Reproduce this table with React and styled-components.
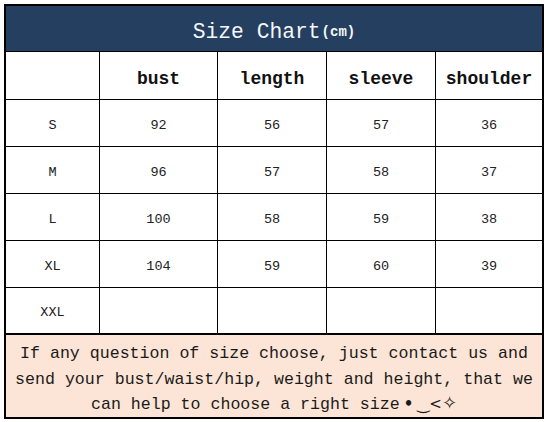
import React from "react";
import styled, { createGlobalStyle } from "styled-components";

const Global = createGlobalStyle`
  html, body { margin: 0; padding: 0; background: #ffffff; }
  body { font-family: "Liberation Mono", "DejaVu Sans Mono", monospace; }
`;

const Page = styled.div`
  width: 548px;
  height: 422px;
  padding: 4px 0 0 4px;
  box-sizing: border-box;
`;

const Frame = styled.div`
  width: 540px;
  box-sizing: border-box;
  border: 2px solid #000;
  display: flex;
  flex-direction: column;
`;

const Title = styled.div`
  background: #243f60;
  border-bottom: 1px solid #000;
  color: #f4f6f8;
  display: flex;
  align-items: center;
  justify-content: center;
  font-size: 21.3px;
  padding-top: 6px;
  height: 39px;
`;

const Unit = styled.span`
  font-size: 14px;
  font-weight: bold;
  margin-left: 1px;
`;

const Grid = styled.div`
  display: grid;
  grid-template-columns: 93px 117px 108px 108px 106px;
  grid-template-rows: 47px 46px 46px 46px 46px 45px;
  gap: 1px;
  background: #000;
  border-bottom: 2px solid #000;
`;

const Cell = styled.div`
  background: #fff;
  display: flex;
  align-items: center;
  justify-content: center;
  color: ${(p) => (p.$head ? "#111" : "#222")};
  font-size: ${(p) => (p.$head ? "18px" : "13.5px")};
  font-weight: ${(p) => (p.$head ? "bold" : "normal")};
  padding-top: ${(p) => (p.$head ? "6px" : "4px")};
`;

const Footer = styled.div`
  height: 82px;
  background: #fce5d6;
  color: #1a1a1a;
  font-size: 16.6px;
  line-height: 25.5px;
  text-align: center;
  display: flex;
  flex-direction: column;
  justify-content: center;
  padding-top: 7px;
  box-sizing: border-box;
`;

const Line = styled.div`
  white-space: pre;
`;

const Emote = styled.span`
  font-family: "DejaVu Sans", sans-serif;
  font-size: 15px;
`;

const Dot = styled.span`
  font-size: 15px;
  font-weight: bold;
  margin: 0 4px 0 4px;
`;

const Star = styled.span`
  font-size: 18px;
  line-height: 1;
`;

const cols = ["", "bust", "length", "sleeve", "shoulder"];
const rows = [
  ["S", "92", "56", "57", "36"],
  ["M", "96", "57", "58", "37"],
  ["L", "100", "58", "59", "38"],
  ["XL", "104", "59", "60", "39"],
  ["XXL", "", "", "", ""],
];

export default function App() {
  return (
    <Page>
      <Global />
      <Frame>
        <Title>
          Size Chart<Unit>(cm)</Unit>
        </Title>
        <Grid>
          {cols.map((c, i) => (
            <Cell key={"h" + i} $head>
              {c}
            </Cell>
          ))}
          {rows.map((r, ri) =>
            r.map((v, ci) => <Cell key={ri + "-" + ci}>{v}</Cell>)
          )}
        </Grid>
        <Footer>
          <Line>If any question of size choose, just contact us and</Line>
          <Line>send your bust/waist/hip, weight and height, that we</Line>
          <Line>
            can help to choose a right size
            <Emote>
              <Dot>•</Dot>‿&lt;<Star>✧</Star>
            </Emote>
          </Line>
        </Footer>
      </Frame>
    </Page>
  );
}
